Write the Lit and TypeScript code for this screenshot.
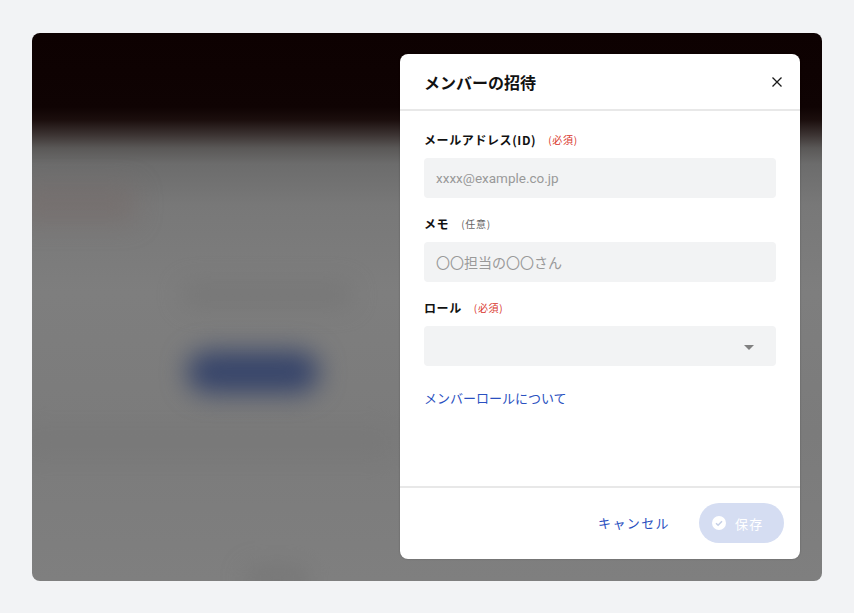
import { LitElement, html, css } from "lit";
import { customElement } from "lit/decorators.js";

@customElement("app-root")
export class AppRoot extends LitElement {
  static override styles = css`
    :host {
      display: block;
      width: 854px;
      height: 613px;
      box-sizing: border-box;
      padding: 33px 32px 32px;
      background: #f2f3f5;
      font-family: "Noto Sans CJK JP", "Noto Sans", Roboto, sans-serif;
      color: #111;
    }
    .stage {
      position: relative;
      overflow: hidden;
      height: 548px;
      box-sizing: border-box;
      border-radius: 8px;
      padding: 21px 22px 22px 0;
      display: flex;
      justify-content: flex-end;
      background: linear-gradient(180deg, #0d0101 0, #0f0303 74px, #1b0e0d 87px, #3a3130 101px, #5a5857 115px, #6c6c6c 131px, #787878 172px, #7e7e7e 260px, #7b7b7b 400px, #7f7f7f 548px);
    }
    /* blurred shapes of the page behind the dialog */
    .blob {
      position: absolute;
      filter: blur(13px);
    }
    .blob.cta {
      left: 155px;
      top: 318px;
      width: 132px;
      height: 42px;
      border-radius: 21px;
      background: #36446a;
    }
    .blob.logo {
      left: -16px;
      top: 152px;
      width: 120px;
      height: 38px;
      background: #766a68;
      opacity: 0.5;
    }
    .blob.heading {
      left: 150px;
      top: 250px;
      width: 170px;
      height: 24px;
      background: #6c6c6c;
      opacity: 0.4;
    }
    .blob.band {
      left: -10px;
      top: 395px;
      width: 370px;
      height: 30px;
      background: #767676;
      opacity: 0.5;
    }
    .blob.low {
      left: 215px;
      top: 535px;
      width: 60px;
      height: 24px;
      background: #6e6e6e;
      opacity: 0.5;
    }
    .modal {
      position: relative;
      width: 400px;
      height: 505px;
      background: #fff;
      border-radius: 8px;
      display: flex;
      flex-direction: column;
      box-shadow: 0 0 2px rgba(0, 0, 0, 0.25);
    }
    .head {
      height: 57px;
      box-sizing: border-box;
      border-bottom: 2px solid #e8e8e8;
      padding: 0 17px 0 24px;
      display: flex;
      align-items: center;
      justify-content: space-between;
    }
    .head h1 {
      margin: 0;
      font-size: 16px;
      font-weight: 700;
      line-height: 24px;
    }
    .close {
      width: 12px;
      height: 12px;
      display: block;
    }
    .body {
      flex: 1;
      padding: 20px 24px 0;
      display: flex;
      flex-direction: column;
    }
    .label {
      height: 18px;
      line-height: 18px;
      font-size: 12px;
      font-weight: 700;
      letter-spacing: 0.6px;
      display: flex;
      align-items: center;
      margin-bottom: 9px;
    }
    .tag {
      font-size: 10px;
      font-weight: 400;
      letter-spacing: 0.7px;
      margin-left: 12px;
    }
    .req {
      color: #d9352b;
    }
    .opt {
      color: #666;
    }
    .field {
      height: 40px;
      box-sizing: border-box;
      background: #f2f3f4;
      border-radius: 4px;
      padding: 0 12px;
      font-size: 14px;
      color: #999;
      display: flex;
      align-items: center;
      justify-content: space-between;
      margin-bottom: 17px;
    }
    .mail {
      font-family: Roboto, sans-serif;
      font-size: 13.5px;
    }
    .arrow {
      width: 10px;
      height: 5px;
      display: block;
      margin: 2px 10px 0 0;
    }
    .link {
      margin-top: 5px;
      font-size: 13px;
      line-height: 20px;
      color: #2a50c0;
    }
    .foot {
      height: 73px;
      box-sizing: border-box;
      border-top: 2px solid #e8e8e8;
      padding: 15px 16px 0 0;
      display: flex;
      justify-content: flex-end;
      align-items: flex-start;
      gap: 29px;
    }
    .cancel {
      height: 40px;
      line-height: 40px;
      font-size: 13px;
      letter-spacing: 1.4px;
      color: #2a50c0;
    }
    .save {
      width: 85px;
      height: 40px;
      box-sizing: border-box;
      padding-left: 13px;
      border-radius: 20px;
      background: #d5ddf2;
      color: #fff;
      font-size: 13px;
      letter-spacing: 1.2px;
      display: flex;
      align-items: center;
      gap: 9px;
    }
    .save svg {
      width: 14px;
      height: 14px;
      display: block;
    }
  `;

  override render() {
    return html`
      <div class="stage">
        <div class="blob logo"></div>
        <div class="blob heading"></div>
        <div class="blob band"></div>
        <div class="blob low"></div>
        <div class="blob cta"></div>
        <div class="modal">
          <div class="head">
            <h1>メンバーの招待</h1>
            <svg class="close" viewBox="0 0 12 12" fill="none" stroke="#1a1a1a" stroke-width="1.3">
              <path d="M1.5 1.5l9 9M10.5 1.5l-9 9"></path>
            </svg>
          </div>
          <div class="body">
            <div class="label">メールアドレス(ID)<span class="tag req">(必須)</span></div>
            <div class="field"><span class="mail">xxxx@example.co.jp</span></div>
            <div class="label">メモ<span class="tag opt">(任意)</span></div>
            <div class="field"><span>〇〇担当の〇〇さん</span></div>
            <div class="label">ロール<span class="tag req">(必須)</span></div>
            <div class="field">
              <span></span>
              <svg class="arrow" viewBox="0 0 10 5"><path d="M0 0h10L5 5z" fill="#808080"></path></svg>
            </div>
            <div class="link">メンバーロールについて</div>
          </div>
          <div class="foot">
            <div class="cancel">キャンセル</div>
            <div class="save">
              <svg viewBox="0 0 14 14">
                <circle cx="7" cy="7" r="7" fill="#fff"></circle>
                <path d="M4 7.2l2.1 2.1L10 5.2" fill="none" stroke="#c5cfe6" stroke-width="1.5"></path>
              </svg>
              <span>保存</span>
            </div>
          </div>
        </div>
      </div>
    `;
  }
}
